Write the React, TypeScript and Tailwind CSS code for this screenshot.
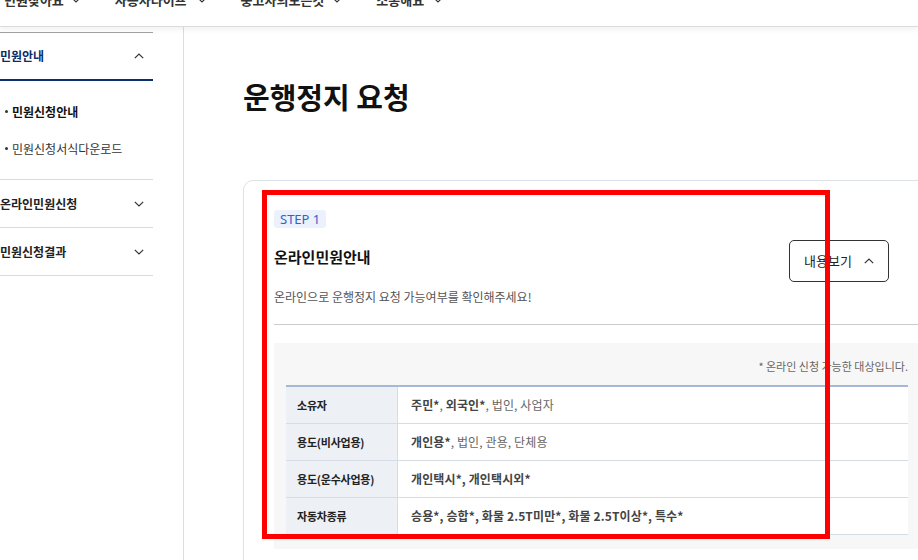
import React from "react";

const ChevronDown = ({ className = "" }: { className?: string }) => (
  <svg width="10" height="6" viewBox="0 0 10 6" className={className} fill="none">
    <polyline points="0.8,0.8 5,5 9.2,0.8" stroke="#333" strokeWidth="1.2" />
  </svg>
);

const ChevronUp = ({ className = "" }: { className?: string }) => (
  <svg width="10" height="6" viewBox="0 0 10 6" className={className} fill="none">
    <polyline points="0.8,5.2 5,1 9.2,5.2" stroke="#333" strokeWidth="1.2" />
  </svg>
);

type Part = { t: string; b?: boolean };

const rows: { head: string; parts: Part[] }[] = [
  {
    head: "소유자",
    parts: [
      { t: "주민*", b: true },
      { t: ", " },
      { t: "외국인*", b: true },
      { t: ", 법인, 사업자" },
    ],
  },
  {
    head: "용도(비사업용)",
    parts: [{ t: "개인용*", b: true }, { t: ", 법인, 관용, 단체용" }],
  },
  {
    head: "용도(운수사업용)",
    parts: [{ t: "개인택시*, 개인택시외*", b: true }],
  },
  {
    head: "자동차종류",
    parts: [{ t: "승용*, 승합*, 화물 2.5T미만*, 화물 2.5T이상*, 특수*", b: true }],
  },
];

const navItems: { n: string; gap: string }[] = [
  { n: "민원찾아요", gap: "ml-[7px]" },
  { n: "자동차라이프", gap: "ml-[10px]" },
  { n: "중고차의모든것", gap: "ml-[8px]" },
  { n: "소통해요", gap: "ml-[9px]" },
];

export default function App() {
  return (
    <div className="relative w-[918px] h-[560px] overflow-hidden bg-white font-['Noto_Sans_CJK_KR','Noto_Sans',sans-serif] text-[#333]">
      {/* top nav */}
      <header className="relative z-10 -mt-[27px] h-[54px] flex items-center gap-[34px] pl-[4px] bg-white border-b border-[#dcdcdc] shadow-[0_3px_5px_rgba(0,0,0,0.05)]">
        {navItems.map((it) => (
          <div key={it.n} className="flex items-center">
            <span className="text-[13px] font-semibold text-[#333] leading-[20px]">{it.n}</span>
            <ChevronDown className={it.gap} />
          </div>
        ))}
      </header>

      <div className="flex">
        {/* sidebar */}
        <aside className="w-[153px] shrink-0 mt-[5px] border-t border-[#a3a3a3]">
          <div className="h-[48px] flex items-center justify-between pr-[9px] border-b-2 border-[#0c2f6b]">
            <span className="text-[12px] font-bold text-[#0c2c66]">민원안내</span>
            <ChevronUp />
          </div>
          <ul className="pt-[12px] pb-[12px] border-b border-[#dadada]">
            <li className="h-[37px] flex items-center">
              <span className="ml-[5px] mr-[4px] w-[3px] h-[3px] rounded-full bg-[#333]" />
              <span className="text-[12px] font-bold text-[#111]">민원신청안내</span>
            </li>
            <li className="h-[37px] flex items-center">
              <span className="ml-[5px] mr-[4px] w-[3px] h-[3px] rounded-full bg-[#333]" />
              <span className="text-[12px] text-[#333]">민원신청서식다운로드</span>
            </li>
          </ul>
          <div className="h-[48px] flex items-center justify-between pr-[9px] border-b border-[#dadada]">
            <span className="text-[12px] font-bold text-[#222]">온라인민원신청</span>
            <ChevronDown />
          </div>
          <div className="h-[48px] flex items-center justify-between pr-[9px] border-b border-[#dadada]">
            <span className="text-[12px] font-bold text-[#222]">민원신청결과</span>
            <ChevronDown />
          </div>
        </aside>

        {/* main */}
        <main className="ml-[30px] h-[533px] border-l border-[#dcdcdc] pl-[59px] shrink-0">
          <h1 className="mt-[49px] h-[40px] leading-[40px] text-[29px] font-bold text-[#111]">
            운행정지 요청
          </h1>

          <section className="mt-[64px] w-[708px] border border-[#dde1e8] rounded-[10px] pt-[29px] pl-[30px] pr-[30px] pb-[40px]">
            <div className="w-fit h-[18px] leading-[18px] px-[6px] rounded-[3px] bg-[#ebf2fd] text-[#3461c6] text-[13px] font-['Noto_Sans',sans-serif]">
              STEP 1
            </div>

            <div className="mt-[12px] flex items-start justify-between">
              <h2 className="mt-[6px] text-[15px] leading-[22px] font-bold text-[#111]">
                온라인민원안내
              </h2>
              <button className="mr-[31px] w-[100px] h-[42px] border border-[#333] rounded-[5px] flex items-center justify-center gap-[12px] bg-white">
                <span className="text-[13px] text-[#222]">내용보기</span>
                <ChevronUp />
              </button>
            </div>

            <p className="mt-[6px] text-[12px] leading-[18px] text-[#555]">
              온라인으로 운행정지 요청 가능여부를 확인해주세요!
            </p>

            <div className="mt-[18px] border-t border-[#cccccc]" />

            <div className="mt-[18px] bg-[#f7f7f7] px-[12px] pt-[15px] pb-[14px]">
              <p className="text-right text-[11px] leading-[16px] text-[#666] mb-[11px]">
                * 온라인 신청 가능한 대상입니다.
              </p>
              <div className="border-t-2 border-[#a5b8d6] bg-white">
                {rows.map((r) => (
                  <div key={r.head} className="flex h-[37px] border-b border-[#d6dce6]">
                    <div className="w-[112px] shrink-0 bg-[#edf0f5] border-r border-[#d6dce6] pl-[11px] flex items-center">
                      <span className="text-[11px] tracking-[-0.02em] font-bold text-[#222]">{r.head}</span>
                    </div>
                    <div className="pl-[13px] flex items-center text-[12px] tracking-[0.01em] whitespace-pre">
                      {r.parts.map((p, i) => (
                        <span key={i} className={p.b ? "font-bold text-[#444]" : "text-[#666]"}>
                          {p.t}
                        </span>
                      ))}
                    </div>
                  </div>
                ))}
              </div>
            </div>
          </section>
        </main>
      </div>

      {/* red annotation box */}
      <div className="absolute left-[262px] top-[190px] w-[568px] h-[349px] border-[5px] border-[#ff0000] pointer-events-none" />
    </div>
  );
}
